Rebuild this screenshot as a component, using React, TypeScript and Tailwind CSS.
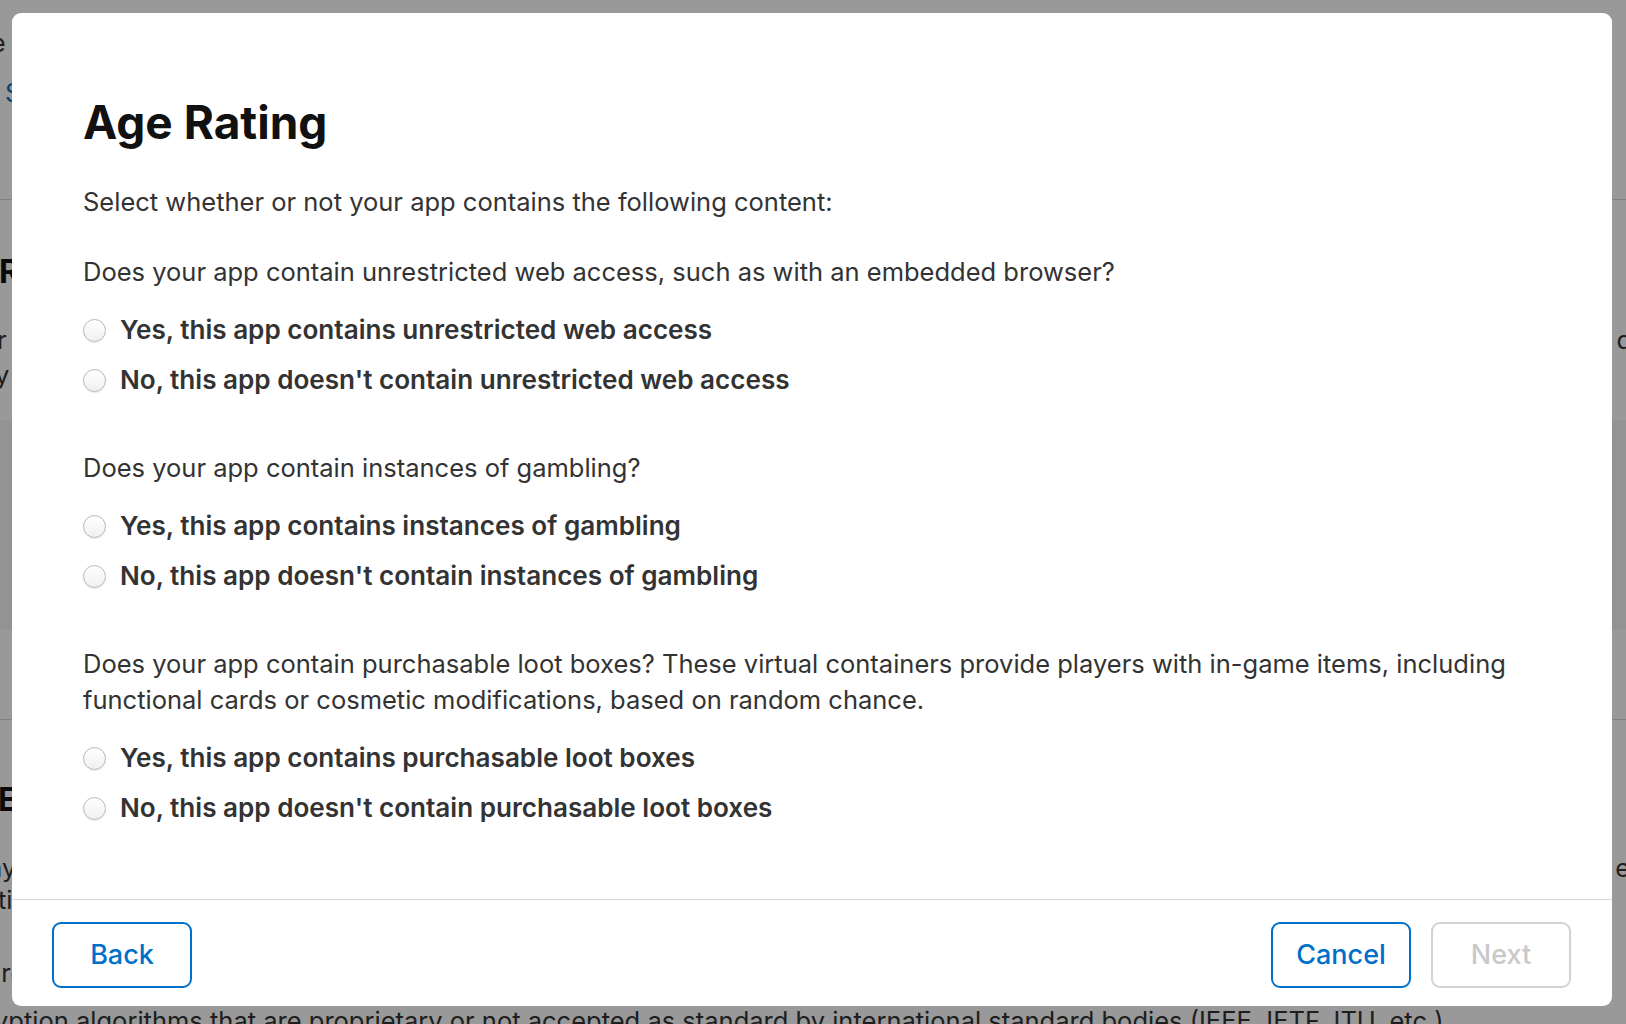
import React from 'react';

type Question = {
  id: string;
  prompt: string;
  yes: string;
  no: string;
};

const QUESTIONS: Question[] = [
  {
    id: 'web',
    prompt: 'Does your app contain unrestricted web access, such as with an embedded browser?',
    yes: 'Yes, this app contains unrestricted web access',
    no: "No, this app doesn't contain unrestricted web access",
  },
  {
    id: 'gambling',
    prompt: 'Does your app contain instances of gambling?',
    yes: 'Yes, this app contains instances of gambling',
    no: "No, this app doesn't contain instances of gambling",
  },
  {
    id: 'loot',
    prompt:
      'Does your app contain purchasable loot boxes? These virtual containers provide players with in-game items, including functional cards or cosmetic modifications, based on random chance.',
    yes: 'Yes, this app contains purchasable loot boxes',
    no: "No, this app doesn't contain purchasable loot boxes",
  },
];

function Radio({ label }: { label: string }) {
  return (
    <label className="flex h-[50px] items-center gap-[14px] cursor-pointer">
      <span className="block h-[23px] w-[23px] shrink-0 rounded-full border border-[#b8b8b8] bg-gradient-to-b from-white to-[#f0f0f0] shadow-[0_1px_1px_rgba(0,0,0,0.08)]" />
      <span className="whitespace-nowrap text-[26.1px] font-semibold text-[#333333]">{label}</span>
    </label>
  );
}

// page that sits behind the dimmed overlay, only its edges show
function BackgroundPage() {
  return (
    <div className="flex flex-col text-[25.5px] text-[#333333]">
      <div className="mt-[26px] ml-[-48px] leading-[33px]">Rate</div>
      <div className="mt-[17px] ml-[5px] leading-[33px] text-[#0070c9]">See</div>
      <div className="mt-[90px] h-px bg-[#d6d6d6]" />
      <div className="mt-[52px] ml-[-1px] text-[32px] font-bold leading-[40px] text-[#111]">Rating</div>
      <div className="mt-[30px] flex justify-between leading-[35px]">
        <span className="ml-[-3px]">r</span>
        <span className="mr-[-6px]">d</span>
      </div>
      <div className="ml-[-5px] leading-[35px]">y</div>
      <div className="mt-[28px] h-[210px] bg-[#f5f5f5]" />
      <div className="mt-[89px] h-px bg-[#d6d6d6]" />
      <div className="mt-[60px] ml-[-2px] text-[32px] font-bold leading-[40px] text-[#111]">E</div>
      <div className="mt-[32px] flex justify-between leading-[32px]">
        <span className="ml-[-12px]">ay</span>
        <span className="mr-[-4px]">e</span>
      </div>
      <div className="ml-[-2px] leading-[32px]">tic</div>
      <div className="mt-[41px] ml-[-13px] leading-[32px]">are</div>
      <div className="mt-[16px] ml-[-6px] whitespace-nowrap leading-[32px]">
        yption algorithms that are proprietary or not accepted as standard by international standard bodies (IEEE, IETF, ITU, etc.)
      </div>
    </div>
  );
}

export default function App() {
  return (
    <div
      className="relative h-[1024px] w-[1626px] overflow-hidden bg-white"
      style={{ fontFamily: 'Inter, "Noto Sans", "Liberation Sans", sans-serif' }}
    >
      <BackgroundPage />
      <div className="absolute inset-0 bg-black/40" />

      {/* Modal */}
      <div className="absolute left-[12px] top-[13px] flex h-[993px] w-[1600px] flex-col rounded-[9px] bg-white">
        <div className="flex-1 pl-[71px] pr-[60px] pt-[86px]">
          <h1 className="h-[46px] text-[46px] font-bold leading-[46px] text-[#111111]">Age Rating</h1>
          <p className="mt-[39px] text-[25.5px] leading-[36px] text-[#333333]">
            Select whether or not your app contains the following content:
          </p>

          <div className="mt-[34px] flex flex-col gap-[45px]">
            {QUESTIONS.map((q) => (
              <div key={q.id}>
                <p className="mb-[15px] text-[25.5px] leading-[36px] text-[#333333]">{q.prompt}</p>
                <Radio label={q.yes} />
                <Radio label={q.no} />
              </div>
            ))}
          </div>
        </div>

        {/* Footer */}
        <div className="flex items-start justify-between border-t border-[#d6d6d6] pb-[18px] pl-[40px] pr-[41px] pt-[22px]">
          <button className="h-[66px] w-[140px] rounded-[9px] border-2 border-[#0070c9] text-[27px] font-medium text-[#0070c9]">
            Back
          </button>
          <div className="flex gap-[20px]">
            <button className="h-[66px] w-[140px] rounded-[9px] border-2 border-[#0070c9] text-[27px] font-medium text-[#0070c9]">
              Cancel
            </button>
            <button
              disabled
              className="h-[66px] w-[140px] rounded-[9px] border-2 border-[#d3d3d3] text-[27px] font-medium text-[#c9c9c9]"
            >
              Next
            </button>
          </div>
        </div>
      </div>
    </div>
  );
}
